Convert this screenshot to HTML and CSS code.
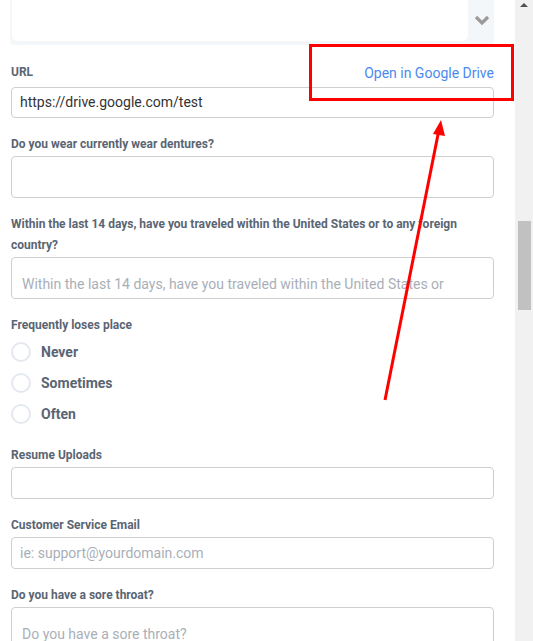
FILE: index.html
```html
<!DOCTYPE html>
<html>
<head>
<meta charset="utf-8">
<link rel="stylesheet" href="styles.css">
</head>
<body>
<div class="page">
  <main class="form">
    <div class="select-panel">
      <div class="select-box"></div>
      <svg class="chev" width="16" height="12" viewBox="0 0 16 12"><path d="M2 3 L8 9 L14 3" fill="none" stroke="#9a9a9a" stroke-width="3.2"/></svg>
    </div>

    <div class="field url-field">
      <div class="label-row">
        <span class="label">URL</span>
        <a class="link">Open in Google Drive</a>
      </div>
      <div class="input h31 value">https://drive.google.com/test</div>
    </div>

    <div class="field">
      <div class="label">Do you wear currently wear dentures?</div>
      <div class="input h42"></div>
    </div>

    <div class="field">
      <div class="label">Within the last 14 days, have you traveled within the United States or to any foreign country?</div>
      <div class="input h42 area placeholder"><span class="clip">Within the last 14 days, have you traveled within the United States or to any foreign country?</span></div>
    </div>

    <div class="field radios">
      <div class="label">Frequently loses place</div>
      <div class="radio"><span class="circle"></span><span>Never</span></div>
      <div class="radio"><span class="circle"></span><span>Sometimes</span></div>
      <div class="radio"><span class="circle"></span><span>Often</span></div>
    </div>

    <div class="field">
      <div class="label">Resume Uploads</div>
      <div class="input h32"></div>
    </div>

    <div class="field">
      <div class="label">Customer Service Email</div>
      <div class="input h32 placeholder email">ie: support@yourdomain.com</div>
    </div>

    <div class="field">
      <div class="label">Do you have a sore throat?</div>
      <div class="input h42 area placeholder"><span class="clip">Do you have a sore throat?</span></div>
    </div>
  </main>
  <aside class="scrollbar">
    <div class="arrow-up"></div>
    <div class="thumb"></div>
  </aside>
</div>
<svg class="annot" width="533" height="641" viewBox="0 0 533 641">
  <rect x="310.5" y="45.5" width="202" height="54" fill="none" stroke="#ff0000" stroke-width="3"/>
  <line x1="385" y1="400" x2="438.5" y2="132" stroke="#ff0000" stroke-width="3"/>
  <polygon points="441,120 445,136 433,134" fill="#ff0000"/>
</svg>
</body>
</html>
```

FILE: styles.css
```css
* { box-sizing: border-box; }
html, body { margin: 0; padding: 0; background: #fff; }
body {
  font-family: Roboto, "Liberation Sans", sans-serif;
  width: 533px;
  height: 641px;
  overflow: hidden;
  position: relative;
}
.page {
  display: flex;
  width: 533px;
  height: 641px;
}
.form {
  width: 515px;
  padding-left: 11px;
  padding-right: 21px;
}
.select-panel {
  margin-left: -1px;
  width: 484px;
  height: 45px;
  background: #f3f7fa;
  display: flex;
  align-items: flex-start;
  padding-left: 2px;
  border-radius: 0 0 4px 4px;
}
.select-box {
  width: 456px;
  height: 41px;
  background: #fff;
  border-radius: 0 0 6px 6px;
}
.chev {
  margin-left: 6px;
  margin-top: 14px;
}
.field {
  margin-top: 16px;
}
.label-row {
  display: flex;
  justify-content: space-between;
  align-items: center;
  height: 22px;
  margin-bottom: 4px;
}
.label {
  font-size: 12px;
  font-weight: 700;
  color: #5a6573;
  line-height: 21px;
  margin-bottom: 1px;
}
.label-row .label { margin-bottom: 0; }
.link {
  font-size: 14px;
  color: #4a8af0;
  line-height: 22px;
  margin-top: 2px;
}
.input {
  width: 483px;
  border: 1px solid #cfcfcf;
  border-radius: 4px;
  background: #fff;
  font-size: 14px;
  white-space: nowrap;
  overflow: hidden;
}
.h31 { height: 31px; }
.h32 { height: 32px; }
.h42 { height: 42px; }
.value {
  color: #333;
  padding-left: 8px;
  line-height: 29px;
}
.placeholder { color: #a9afb7; }
.area {
  padding: 17px 46px 0 10px;
  line-height: 18px;
}
.clip {
  display: block;
  overflow: hidden;
  white-space: nowrap;
}
.email {
  padding-left: 8px;
  line-height: 30px;
}
.radios .label { margin-bottom: 0; }
.radio {
  display: flex;
  align-items: center;
  height: 31px;
  font-size: 14px;
  font-weight: 700;
  color: #5a6573;
}
.circle {
  width: 20px;
  height: 20px;
  border: 2px solid #e4e9ef;
  border-radius: 50%;
  margin-right: 10px;
}
.scrollbar {
  width: 18px;
  height: 641px;
  background: #f1f1f1;
  display: flex;
  flex-direction: column;
  align-items: center;
}
.arrow-up {
  width: 0;
  height: 0;
  border-left: 4px solid transparent;
  border-right: 4px solid transparent;
  border-bottom: 4px solid #505050;
  margin-top: 3px;
}
.thumb {
  width: 13px;
  height: 89px;
  background: #c1c1c1;
  margin-top: 214px;
}
.annot {
  position: absolute;
  left: 0;
  top: 0;
  pointer-events: none;
}
```
